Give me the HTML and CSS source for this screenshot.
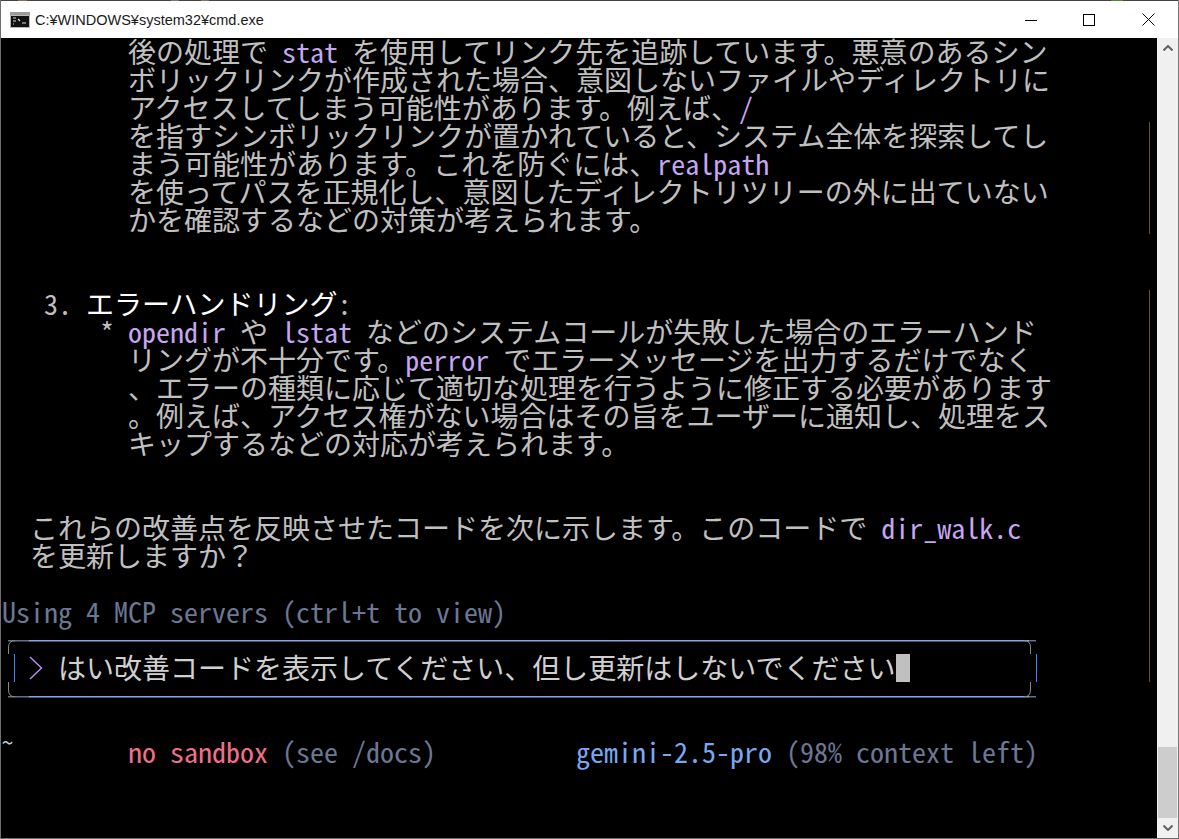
FILE: index.html
```html
<!DOCTYPE html>
<html lang="ja">
<head>
<meta charset="utf-8">
<title>cmd.exe</title>
<link rel="stylesheet" href="styles.css">
</head>
<body>
<div class="window">
  <div class="strip"></div>
  <header class="titlebar">
    <svg class="appicon" width="20" height="16" viewBox="0 0 20 16"><rect width="20" height="16" fill="#b8b8b8"/><rect x="0" y="0" width="20" height="3" fill="#9a9a9a"/><rect x="1" y="4" width="18" height="11" fill="#111"/><path d="M3 6h3M3 9h3M3 12h1M8 7l2 2M12 11h4" stroke="#ddd" stroke-width="1.2" fill="none"/></svg>
    <span class="title">C:¥WINDOWS¥system32¥cmd.exe</span>
    <div class="controls">
      <span class="ctl"><svg width="12" height="12" viewBox="0 0 12 12"><path d="M0 6.500h12" stroke="#000" fill="none"/></svg></span>
      <span class="ctl ctl-max"><svg width="12" height="12" viewBox="0 0 12 12"><rect x=".5" y=".5" width="11" height="11" stroke="#000" fill="none"/></svg></span>
      <span class="ctl"><svg width="13" height="13" viewBox="0 0 13 13"><path d="M.5.5l12 12M12.5.5l-12 12" stroke="#000" fill="none"/></svg></span>
    </div>
  </header>
  <div class="body">
    <main class="term">
      <span class="rule rule-a"></span>
      <span class="rule rule-b"></span>
      <div class="line">         後の処理で <span class="code">stat</span> を使用してリンク先を追跡しています。悪意のあるシン</div>
      <div class="line">         ボリックリンクが作成された場合、意図しないファイルやディレクトリに</div>
      <div class="line">         アクセスしてしまう可能性があります。例えば、<span class="code">/</span></div>
      <div class="line">         を指すシンボリックリンクが置かれていると、システム全体を探索してし</div>
      <div class="line">         まう可能性があります。これを防ぐには、<span class="code">realpath</span></div>
      <div class="line">         を使ってパスを正規化し、意図したディレクトリツリーの外に出ていない</div>
      <div class="line">         かを確認するなどの対策が考えられます。</div>
      <div class="line"></div>
      <div class="line"></div>
      <div class="line">   3. <span class="strong">エラーハンドリング</span>:</div>
      <div class="line">       * <span class="code">opendir</span> や <span class="code">lstat</span> などのシステムコールが失敗した場合のエラーハンド</div>
      <div class="line">         リングが不十分です。<span class="code">perror</span> でエラーメッセージを出力するだけでなく</div>
      <div class="line">         、エラーの種類に応じて適切な処理を行うように修正する必要があります</div>
      <div class="line">         。例えば、アクセス権がない場合はその旨をユーザーに通知し、処理をス</div>
      <div class="line">         キップするなどの対応が考えられます。</div>
      <div class="line"></div>
      <div class="line"></div>
      <div class="line">  これらの改善点を反映させたコードを次に示します。このコードで <span class="code">dir_walk.c</span></div>
      <div class="line">  を更新しますか<span class="full">？</span></div>
      <div class="line"></div>
      <div class="line dim">Using 4 MCP servers (ctrl+t to view)</div>
      <div class="inputbox">
        <svg class="frame" width="1040" height="84" viewBox="0 0 1040 84">
          <path d="M8 14.750H29M1029 14.750H1036M8 70.750H29M1029 70.750H1036" stroke="#66708a" stroke-width="1.500" fill="none"/>
          <path d="M29 14.750H1029M29 70.750H1029" stroke="#86a8e4" stroke-width="1.500" fill="none"/>
          <path d="M15 14.750Q8.500 14.750 8.500 21V28M15 70.750Q8.500 70.750 8.500 64V56" stroke="#8c8a80" fill="none"/>
          <path d="M1024 14.750Q1030.500 14.750 1030.500 21V28M1024 70.750Q1030.500 70.750 1030.500 64V56" stroke="#8c8a80" fill="none"/>
          <path d="M14.500 28V56" stroke="#3d84f2" fill="none"/>
          <path d="M1036.500 28V56" stroke="#3d84f2" fill="none"/>
          <path d="M30 31L41.500 42L30 53" stroke="#b78cf0" stroke-width="1.500" fill="none"/>
        </svg>
        <div class="line">    <span class="input">はい改善コードを表示してください、但し更新はしないでください</span><span class="cursor"></span></div>
      </div>
      <div class="line"></div>
      <div class="line status"><span class="tilde">~</span>        <span class="pink">no sandbox</span><span class="dim"> (see /docs)</span>          <span class="blue">gemini-2.5-pro</span><span class="dim"> (98% context left)</span></div>
    </main>
    <aside class="scrollbar">
      <svg class="arrow" width="10" height="6" viewBox="0 0 10 6"><path d="M.5 5.500L5 1l4.500 4.500" stroke="#606060" stroke-width="2" fill="none"/></svg>
      <div class="track"><div class="thumb"></div></div>
      <svg class="arrow" width="10" height="6" viewBox="0 0 10 6"><path d="M.5.500L5 5l4.500-4.500" stroke="#606060" stroke-width="2" fill="none"/></svg>
    </aside>
  </div>
</div>
</body>
</html>
```

FILE: styles.css
```css
html, body { margin: 0; padding: 0; background: #000; }
body { width: 1179px; height: 839px; overflow: hidden; }
.window { width: 1179px; height: 839px; box-sizing: border-box; border: 1px solid #6e6e6e; border-top: 0; border-right-color: #777; display: flex; flex-direction: column; background: #000; }
.strip { height: 1px; flex: none; background: linear-gradient(90deg, #444 0 17px, #8a6a50 17px 26px, #444 26px 170px, #777 170px 178px, #444 178px 200px, #8a7060 200px 208px, #444 208px 1110px, #4f8a30 1110px 1122px, #444 1122px); }
.titlebar { height: 37px; flex: none; background: #fff; display: flex; align-items: center; padding-left: 9px; box-sizing: border-box; }
.appicon { margin-right: 5px; }
.title { font: 14.500px/20px "Liberation Sans", sans-serif; color: #1a1a1a; }
.controls { margin-left: auto; display: flex; }
.ctl { width: 59px; height: 37px; display: flex; align-items: center; justify-content: center; }
.ctl-max svg { margin-right: 2px; }
.body { flex: 1; display: flex; min-height: 0; }
.term { flex: 1; min-width: 0; position: relative; color: #c0c0c0; background: #000; overflow: hidden; }
.line { height: 28px; line-height: 26px; white-space: pre; font-family: "Noto Sans CJK JP", sans-serif; font-size: 28px; font-feature-settings: "hwid"; padding-left: 1px; }
.code { color: #c4a7f0; }
.strong { color: #fff; }
.dim { color: #6c7794; }
.pink { color: #f0708c; }
.blue { color: #78a8f0; }
.full { font-feature-settings: normal; }
.input { color: #d0d0d0; }
.cursor { display: inline-block; width: 14px; height: 28px; background: #c0c0c0; vertical-align: top; }
.inputbox { position: relative; height: 84px; padding-top: 28px; box-sizing: border-box; }
.frame { position: absolute; left: -1px; top: 0; }
.tilde { font-size: 22px; line-height: 0; margin-right: 3px; color: #c3d8e8; vertical-align: 12px; }
.rule { position: absolute; left: 1148px; width: 1px; background: #6e5238; }
.rule-a { top: 84px; height: 112px; }
.rule-b { top: 252px; height: 392px; }
.scrollbar { width: 21px; flex: none; background: #f0f0f0; display: flex; flex-direction: column; align-items: center; }
.scrollbar .arrow { flex: none; margin: 7px 0; }
.track { flex: 1; width: 100%; position: relative; }
.thumb { position: absolute; left: 1px; right: 1px; bottom: 0; height: 71px; background: #cdcdcd; }
```
